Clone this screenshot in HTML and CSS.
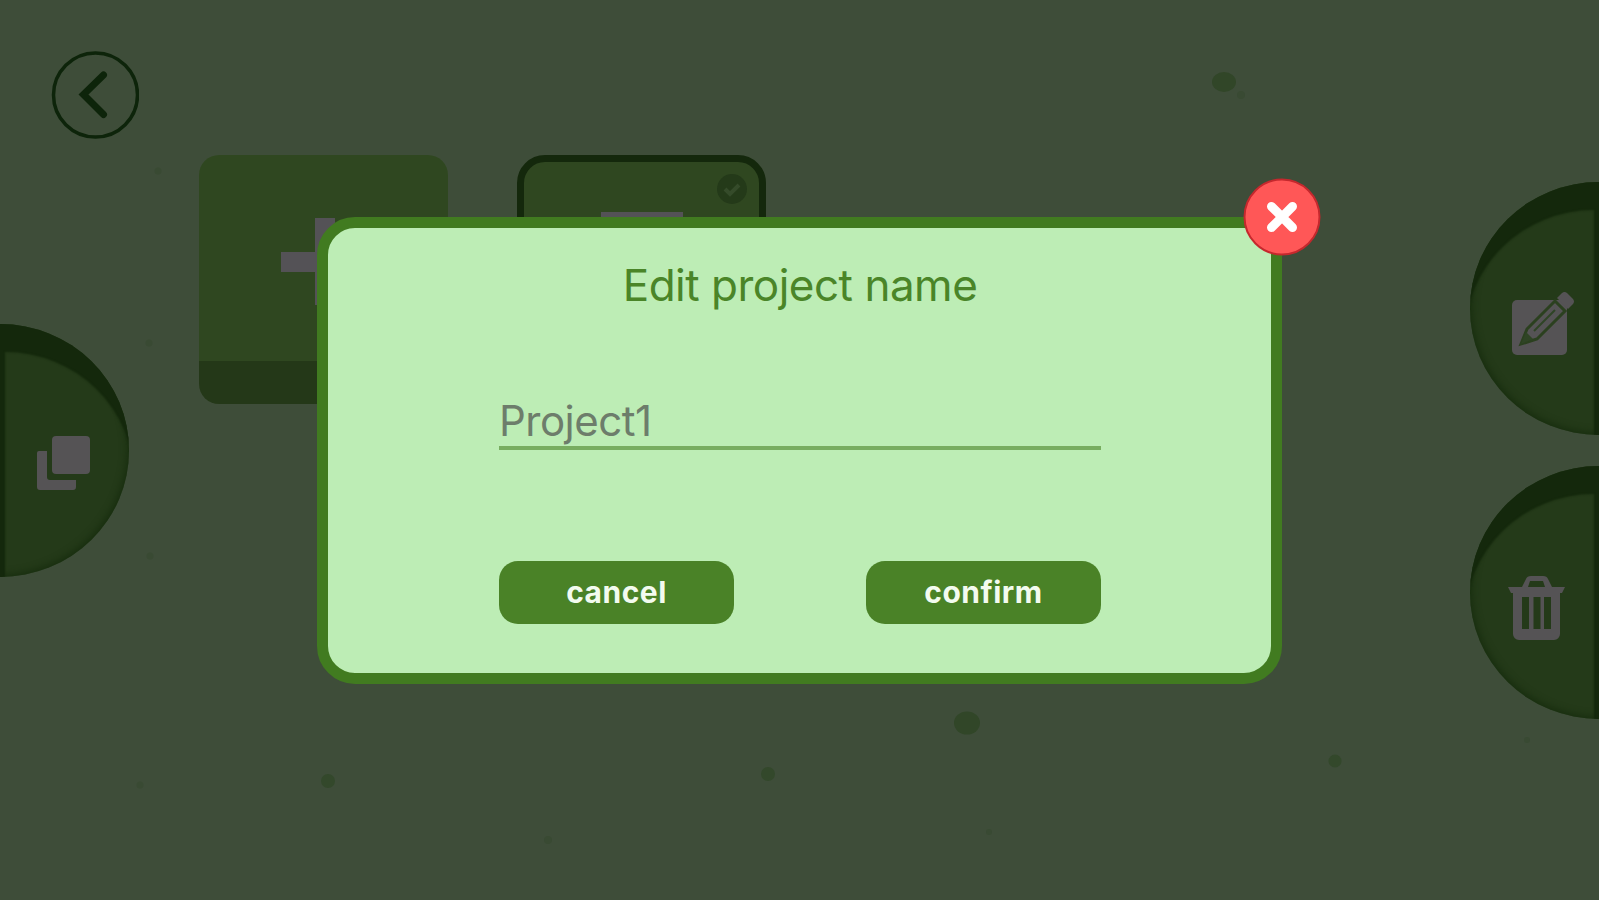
FILE: index.html
```html
<!DOCTYPE html>
<html lang="en">
<head>
    <meta charset="UTF-8">
    <meta name="viewport" content="width=device-width, initial-scale=1.0">
    <title>Edit project name</title>
    <link rel="stylesheet" href="styles.css">
</head>
<body>

    <!-- background spots -->
    <svg class="spots" viewBox="0 0 1599 900">
        <ellipse cx="1224" cy="82" rx="12" ry="10"/>
        <ellipse cx="967" cy="723" rx="13" ry="11.5"/>
        <g class="mid">
            <circle cx="328" cy="781" r="7"/>
            <circle cx="768" cy="774" r="7"/>
            <circle cx="1335" cy="761" r="6.500"/>
        </g>
        <g class="faint">
            <circle cx="1241" cy="95" r="4"/>
            <circle cx="158" cy="171" r="3.500"/>
            <circle cx="149" cy="343" r="3.500"/>
            <circle cx="150" cy="556" r="3.500"/>
            <circle cx="140" cy="785" r="3.500"/>
            <circle cx="548" cy="840" r="4"/>
            <circle cx="989" cy="832" r="3"/>
            <circle cx="1527" cy="740" r="3"/>
        </g>
    </svg>

    <div class="page">
        <div class="rail left">
            <svg class="back" viewBox="0 0 88 88">
                <circle cx="44.500" cy="44" r="42"/>
                <path d="M52.500 24L32.500 43.500L52.500 63.500"/>
            </svg>
            <div class="side-button">
                <svg class="icon copy" viewBox="0 0 54 54">
                    <path d="M2 15h8v26a3 3 0 0 0 3 3h26v7a3 3 0 0 1-3 3H3a3 3 0 0 1-3-3V17a2 2 0 0 1 2-2z"/>
                    <rect x="15" y="0" width="38" height="38" rx="4"/>
                </svg>
            </div>
        </div>

        <div class="projects">
            <div class="card new"><div class="plus"></div></div>
            <div class="card selected">
                <svg class="check" viewBox="0 0 32 32">
                    <circle cx="16" cy="16" r="15"/>
                    <path d="M9 16l5 5l9-9"/>
                </svg>
                <div class="sheet"></div>
            </div>
        </div>

        <div class="rail right">
            <div class="side-button">
                <svg class="icon edit" viewBox="0 0 64 64">
                    <rect x="0" y="8" width="55" height="55" rx="5"/>
                    <path class="pencil" d="M9 52L15 37L43 9L53 19L25 47Z"/>
                    <path class="lead" d="M9 52L14 40L21 47Z"/>
                    <path class="shine" d="M22 39L43 18"/>
                    <path d="M45 6l5-5a4 4 0 0 1 5 0l6 6a4 4 0 0 1 0 5l-5 5z"/>
                </svg>
            </div>
            <div class="side-button">
                <svg class="icon trash" viewBox="0 0 57 65">
                    <path fill-rule="evenodd" d="M0 11h14l4-8q1-3 5-3h12q4 0 5 3l4 8h13l-3 6h-2v41a6 6 0 0 1-6 6H11a6 6 0 0 1-6-6V17H3zM20 11h17l-2-6H22zM14 21v32h7V21zM25.500 21v32h7V21zM36 21v32h7V21z"/>
                </svg>
            </div>
        </div>
    </div>

    <!-- modal -->
    <div class="overlay">
        <div class="modal">
            <h1 class="title">Edit project name</h1>
            <div class="field">Project1</div>
            <div class="buttons">
                <button class="btn">cancel</button>
                <button class="btn">confirm</button>
            </div>
            <svg class="close" viewBox="0 0 78 78">
                <circle cx="39" cy="39" r="37.500"/>
                <path d="M28.500 28.500L49.500 49.500M49.500 28.500L28.500 49.500"/>
            </svg>
        </div>
    </div>

</body>
</html>
```
FILE: styles.css
```css
body {
    margin: 0;
    background: #3e4d39;
    font-family: Inter, "Liberation Sans", sans-serif;
    overflow: hidden;
}
.spots {
    position: absolute;
    top: 0; left: 0;
    width: 1599px; height: 900px;
    fill: #314628;
}
.spots .mid {
    fill: #33482b;
}
.spots .faint {
    fill: #394a33;
}
.page {
    height: 900px;
    display: flex;
    position: relative;
}

/* side rails */
.rail {
    display: flex;
    flex-direction: column;
}
.left {
    width: 199px;
}
.right {
    width: 129px;
    margin-left: auto;
    padding-top: 182px;
    gap: 31px;
}
.back {
    width: 88px;
    height: 88px;
    margin: 51px 0 0 51px;
    fill: none;
    stroke: #0d240a;
    stroke-width: 3.5;
}
.back path {
    stroke-width: 7;
    stroke-linecap: round;
}
.side-button {
    width: 129px;
    height: 253px;
    box-sizing: border-box;
    background: #243a19;
}
.left .side-button {
    margin-top: 185px;
    border-radius: 0 129px 129px 0 / 0 126.5px 126.5px 0;
    box-shadow: inset 5px 28px 2px #14280c, inset -2px -2px 7px #182e0f;
    padding: 112px 0 0 37px;
}
.right .side-button {
    border-radius: 129px 0 0 129px / 126.5px 0 0 126.5px;
    box-shadow: inset -5px 28px 2px #14280c, inset 2px -2px 7px #182e0f;
    padding: 110px 0 0 42px;
}
.icon {
    display: block;
    fill: #555355;
}
.copy {
    width: 54px;
    height: 54px;
}
.edit {
    width: 64px;
    height: 64px;
}
.edit .pencil {
    fill: #555355;
    stroke: #2b401f;
    stroke-width: 3;
}
.edit .lead {
    fill: #2f4425;
}
.edit .shine {
    stroke: #2f4425;
    stroke-width: 2;
}
.trash {
    width: 57px;
    height: 65px;
    margin-left: -4px;
}

/* project cards */
.projects {
    display: flex;
    align-items: flex-start;
    gap: 69px;
    padding-top: 155px;
}
.card {
    width: 249px;
    height: 249px;
    box-sizing: border-box;
    border-radius: 20px;
    background: linear-gradient(#2f4720 206px, #243818 206px);
}
.new {
    padding: 63px 0 0 82px;
}
.plus {
    width: 87px;
    height: 87px;
    background:
        linear-gradient(#545256, #545256) center / 20px 100% no-repeat,
        linear-gradient(#545256, #545256) center / 100% 20px no-repeat;
}
.selected {
    border: 7px solid #14280c;
    border-radius: 28px;
    display: flex;
    flex-direction: column;
}
.check {
    width: 32px;
    height: 32px;
    margin: 11px 11px 0 auto;
    fill: #243a19;
}
.check path {
    fill: none;
    stroke: #354b2a;
    stroke-width: 4;
}
.sheet {
    width: 82px;
    height: 100px;
    margin: 7px 0 0 77px;
    background: #545256;
}

/* modal */
.overlay {
    position: fixed;
    top: 0; left: 0;
    width: 100%; height: 100%;
    display: flex;
    justify-content: center;
    align-items: center;
}
.modal {
    position: relative;
    width: 965px;
    height: 467px;
    box-sizing: border-box;
    border: 11px solid #417b20;
    border-radius: 38px;
    background: #bdedb5;
    padding: 29px 170px 0 171px;
}
.title {
    margin: 0;
    line-height: 56px;
    font-size: 44px;
    font-weight: 400;
    letter-spacing: -0.5px;
    text-align: center;
    white-space: nowrap;
    color: #4a8528;
}
.field {
    height: 53px;
    margin-top: 80px;
    border-bottom: 4px solid #78ad60;
    line-height: 55px;
    font-size: 42px;
    letter-spacing: -0.5px;
    color: #6d7d6b;
}
.buttons {
    display: flex;
    justify-content: space-between;
    margin-top: 111px;
}
.btn {
    width: 235px;
    height: 63px;
    border: 0;
    border-radius: 19px;
    padding: 0;
    background: #4a8227;
    color: #f3fbef;
    font: 700 30px Inter, "Liberation Sans", sans-serif;
    letter-spacing: 0.5px;
}
.close {
    position: absolute;
    top: -50px;
    right: -50px;
    width: 78px;
    height: 78px;
    fill: #ff5757;
    stroke: #c5282d;
    stroke-width: 2;
}
.close path {
    stroke: #fff;
    stroke-width: 9;
    stroke-linecap: round;
}
```
